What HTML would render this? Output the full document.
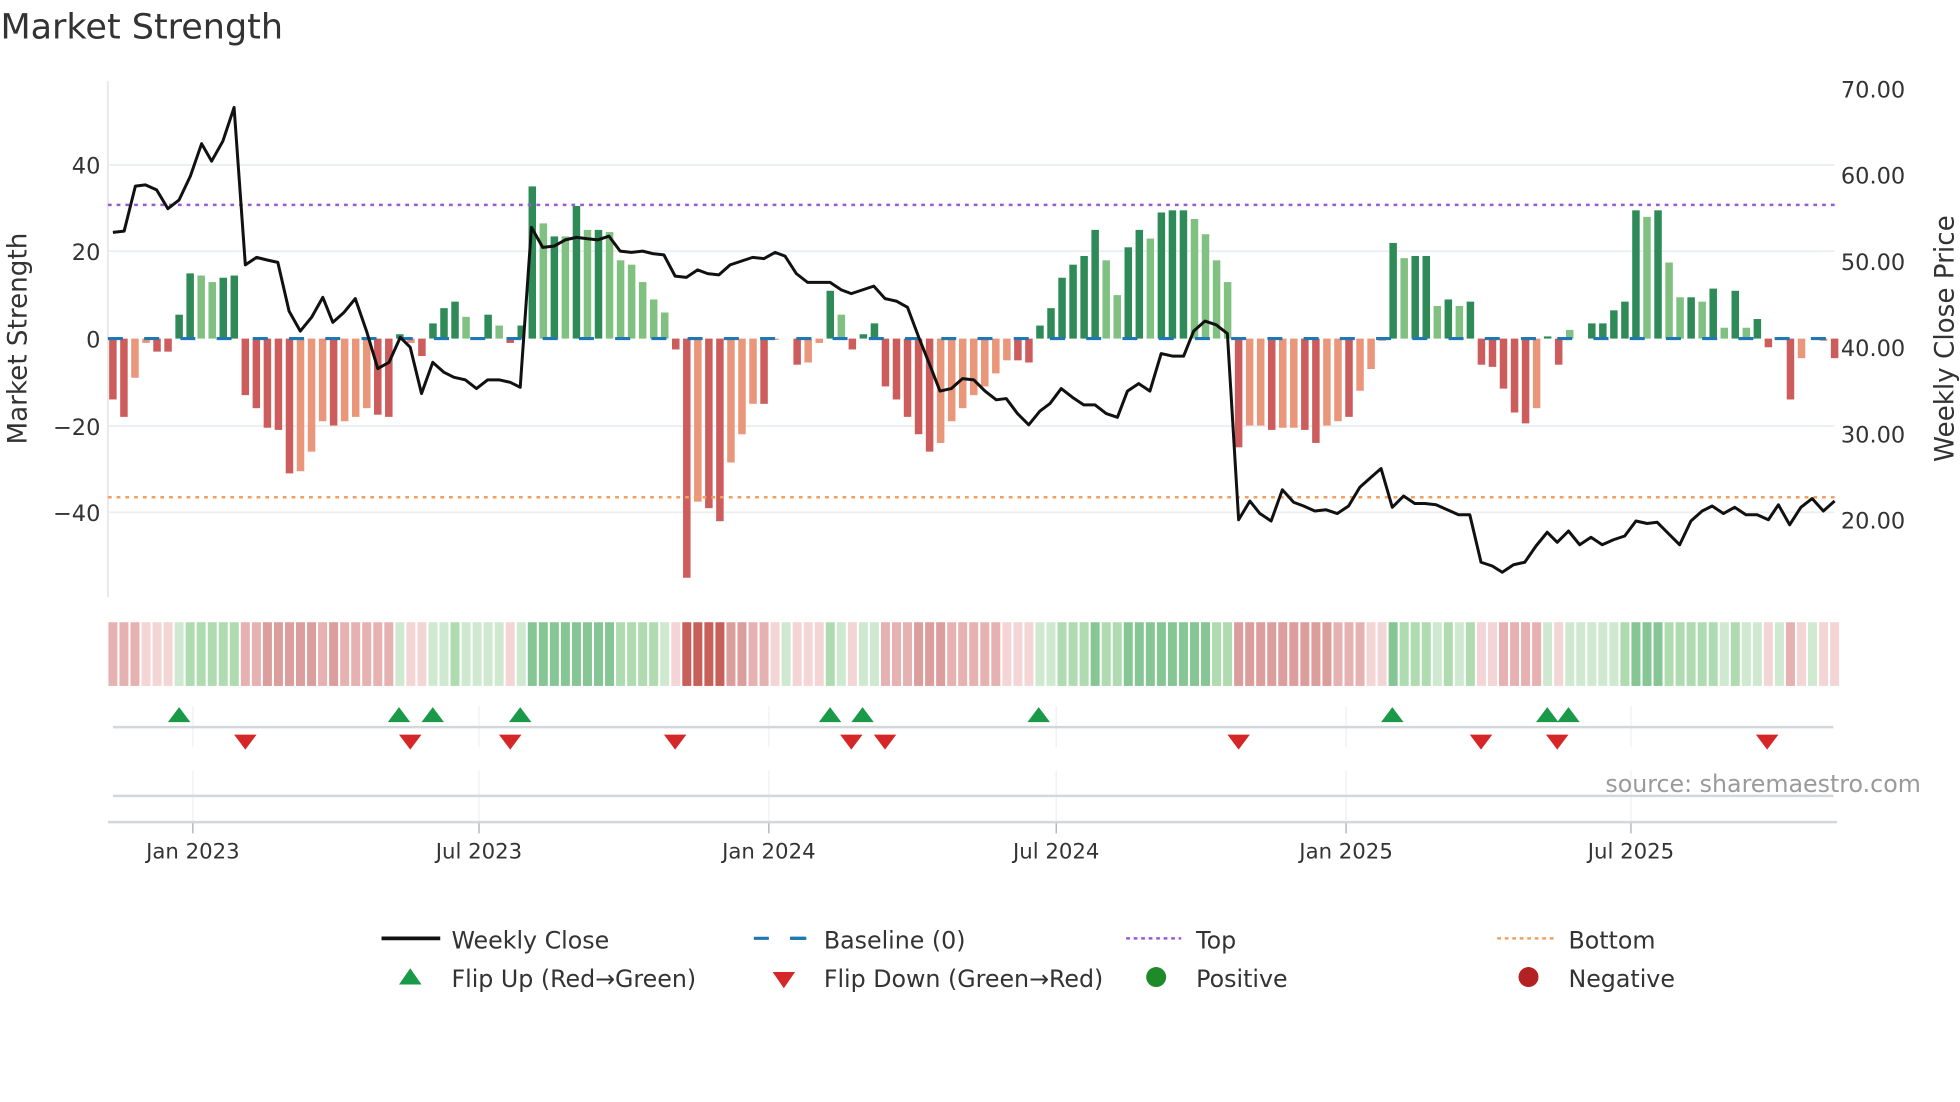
<!DOCTYPE html>
<html><head><meta charset="utf-8"><style>
html,body{margin:0;padding:0;background:#fff;width:1960px;height:1102px;overflow:hidden}
svg{display:block;font-family:"DejaVu Sans","Liberation Sans",sans-serif}
</style></head><body>
<svg id="s" width="1960" height="1102" viewBox="0 0 1568 882" xmlns="http://www.w3.org/2000/svg">
<text x="0" y="31" font-size="28" fill="#333">Market Strength</text>
<g stroke="#eceff2" stroke-width="1.5">
<line x1="86" x2="1468" y1="132" y2="132"/><line x1="86" x2="1468" y1="201" y2="201"/>
<line x1="86" x2="1468" y1="341" y2="341"/><line x1="86" x2="1468" y1="410" y2="410"/>
</g>
<line x1="86" x2="86" y1="65" y2="478" stroke="#e6e8eb" stroke-width="1.5"/>
<g font-size="18" fill="#333" text-anchor="end">
<text x="80" y="139">40</text><text x="80" y="208">20</text><text x="80" y="278">0</text>
<text x="80" y="348">−20</text><text x="80" y="417">−40</text>
</g>
<g font-size="18" fill="#333">
<text x="1473" y="78">70.00</text><text x="1473" y="147">60.00</text><text x="1473" y="216">50.00</text>
<text x="1473" y="285">40.00</text><text x="1473" y="354">30.00</text><text x="1473" y="423">20.00</text>
</g>
<text transform="translate(21,271) rotate(-90)" font-size="21" fill="#333" text-anchor="middle">Market Strength</text>
<text transform="translate(1563,271) rotate(-90)" font-size="21" fill="#333" text-anchor="middle">Weekly Close Price</text>
<g id="bars"></g>
<line x1="86" x2="1468" y1="271" y2="271" stroke="#1f77b4" stroke-width="2.5" stroke-dasharray="12,17"/>
<line x1="86" x2="1468" y1="164" y2="164" stroke="#9b59d6" stroke-width="2" stroke-dasharray="3,4"/>
<line x1="86" x2="1468" y1="398" y2="398" stroke="#f0a060" stroke-width="2" stroke-dasharray="3,4"/>
<polyline id="price" fill="none" stroke="#111" stroke-width="2.4" stroke-linejoin="round"/>
<g id="strip"></g>
<g id="vg" stroke="#eef0f2" stroke-width="1"></g>
<line x1="90" x2="1467" y1="582" y2="582" stroke="#d4d7da" stroke-width="2"/>
<line x1="90" x2="1467" y1="637" y2="637" stroke="#d4d7da" stroke-width="2"/>
<line x1="86" x2="1470" y1="658" y2="658" stroke="#d4d7da" stroke-width="2"/>
<g id="marks"></g>
<text x="1537" y="634" font-size="19" fill="#9a9a9a" text-anchor="end">source: sharemaestro.com</text>
<g id="dates" font-size="17" fill="#333" text-anchor="middle"></g>
<g font-size="19" fill="#333">
<line x1="305" x2="352" y1="751" y2="751" stroke="#111" stroke-width="3"/>
<text x="361" y="759">Weekly Close</text>
<line x1="603" x2="645" y1="751" y2="751" stroke="#1f77b4" stroke-width="2.5" stroke-dasharray="12,17"/>
<line x1="632" x2="645" y1="751" y2="751" stroke="#1f77b4" stroke-width="2.5"/>
<text x="659" y="759">Baseline (0)</text>
<line x1="901" x2="945" y1="751" y2="751" stroke="#9b59d6" stroke-width="2" stroke-dasharray="3,3"/>
<text x="957" y="759">Top</text>
<line x1="1198" x2="1243" y1="751" y2="751" stroke="#f0a060" stroke-width="2" stroke-dasharray="3,3"/>
<text x="1255" y="759">Bottom</text>
<polygon points="319,788 337,788 328,775" fill="#1a9a48"/>
<text x="361" y="790">Flip Up (Red→Green)</text>
<polygon points="618,778 636,778 627,791" fill="#d62728"/>
<text x="659" y="790">Flip Down (Green→Red)</text>
<circle cx="925" cy="782" r="8" fill="#1f8a2a"/>
<text x="957" y="790">Positive</text>
<circle cx="1223" cy="782" r="8" fill="#b22222"/>
<text x="1255" y="790">Negative</text>
</g>
</svg>
<script>
var NS="http://www.w3.org/2000/svg";
function el(p,t,a){var e=document.createElementNS(NS,t);for(var k in a)e.setAttribute(k,a[k]);p.appendChild(e);return e;}
var B=[[-14,1],[-18,1],[-9,0],[-1,0],[-3,1],[-3,1],[5.5,1],[15,1],[14.5,0],[13,0],[14,1],[14.5,1],
[-13,1],[-16,1],[-20.5,1],[-21,1],[-31,1],[-30.5,0],[-26,0],[-19,0],[-20,1],[-19,0],[-18,0],[-16,0],[-17.5,1],[-18,1],
[1,1],[-1,0],[-4,1],[3.5,1],[7,1],[8.5,1],[5,0],[0,1],[5.5,1],[3,0],[-1,1],[3,1],
[35,1],[26.5,0],[23.5,1],[23.5,0],[30.5,1],[25,0],[25,1],[24.5,0],[18,0],[17,0],[13,0],[9,0],[6,0],
[-2.5,1],[-55,1],[-37.5,0],[-39,1],[-42,1],[-28.5,0],[-22,0],[-15,0],[-15,1],[-0.3,0],[0,0],[-6,1],[-5.5,0],[-1,0],
[11,1],[5.5,0],[-2.5,1],[1,1],[3.5,1],[-11,1],[-14,1],[-18,1],[-22,1],[-26,1],[-24,0],[-19,0],[-16,0],[-13,0],[-11,0],[-8,0],[-5,0],[-5,1],[-5.5,1],
[3,1],[7,1],[14,1],[17,1],[19,1],[25,1],[18,0],[10,0],[21,1],[25,1],[23,0],[29,1],[29.5,1],[29.5,1],[27.5,0],[24,0],[18,0],[13,0],
[-25,1],[-20,0],[-20,0],[-21,1],[-20.5,0],[-20.5,0],[-21,1],[-24,1],[-20,0],[-19,0],[-18,1],[-12,0],[-7,0],[-0.5,0],
[22,1],[18.5,0],[19,1],[19,1],[7.5,0],[9,1],[7.5,0],[8.5,1],
[-6,1],[-6.5,1],[-11.5,1],[-17,1],[-19.5,1],[-16,0],[0.5,1],[-6,1],[2,0],[0,0],
[3.5,1],[3.5,1],[6.5,1],[8.5,1],[29.5,1],[28,0],[29.5,1],[17.5,0],[9.5,0],[9.5,1],[8.5,0],[11.5,1],[2.5,0],[11,1],[2.5,0],[4.5,1],
[-2,1],[0,0],[-14,1],[-4.5,0],[0,0],[-0.5,0],[-4.5,1]];
var bars=document.getElementById('bars'),strip=document.getElementById('strip');
var step=(1468-90)/(B.length-1);
B.forEach(function(b,i){
 var x=90+i*step,v=b[0],h=Math.abs(v)*3.48;
 var c=v>=0?(b[1]?'#2e8b57':'#80c080'):(b[1]?'#cd5c5c':'#e9967a');
 if(h>0.3) el(bars,'rect',{x:x-3,y:v>=0?271-h:271,width:6,height:h,fill:c});
 var a=Math.abs(v),sc;
 if(v>=0) sc=a<8?'#cfe9d0':a<20?'#aedcb0':'#86c695';
 else sc=a<8?'#f3d5d5':a<20?'#e6b1b1':a<35?'#dc9d9d':'#c8605a';
 el(strip,'rect',{x:x-3.6,y:498,width:7.2,height:51,fill:sc});
});
var P=[[90,186],[99,185],[108,149],[116,148],[125,152],[134,167],[143,160],[152,141],[161,115],[169,129],[178,113],[187,86],[196,212],[205,206],[213,208],[222,210],[231,249],[240,265],[249,254],[258,238],[266,258],[275,250],[284,239],[293,265],[302,295],[311,290],[320,270],[328,278],[337,315],[346,290],[355,298],[363,302],[372,304],[381,311],[390,304],[399,304],[408,306],[416,310],[425,182],[434,198],[443,197],[452,192],[461,190],[469,191],[478,192],[487,189],[496,201],[505,202],[514,201],[522,203],[531,204],[540,221],[549,222],[558,216],[566,219],[575,220],[584,212],[593,209],[602,206],[611,207],[620,202],[628,205],[637,219],[646,226],[655,226],[664,226],[673,232],[681,235],[690,232],[699,229],[708,239],[717,241],[726,246],[735,270],[743,290],[752,313],[761,311],[770,303],[779,304],[788,313],[797,320],[805,319],[814,331],[823,340],[832,329],[840,323],[849,311],[858,318],[867,324],[876,324],[885,331],[894,334],[902,313],[911,307],[920,313],[929,283],[938,285],[947,285],[955,265],[964,257],[973,260],[982,267],[991,416],[1000,401],[1008,411],[1017,417],[1026,392],[1035,402],[1043,405],[1052,409],[1061,408],[1070,411],[1079,405],[1088,390],[1097,382],[1105,375],[1114,406],[1123,397],[1132,403],[1140,403],[1149,404],[1158,408],[1167,412],[1176,412],[1185,450],[1194,453],[1202,458],[1211,452],[1220,450],[1229,437],[1238,426],[1246,434],[1255,425],[1264,436],[1273,430],[1282,436],[1291,432],[1300,429],[1309,417],[1318,419],[1326,418],[1335,427],[1344,436],[1353,417],[1362,409],[1370,405],[1379,411],[1388,406],[1397,412],[1406,412],[1415,416],[1423,404],[1432,420],[1441,406],[1450,399],[1459,409],[1468,401]];
document.getElementById('price').setAttribute('points',P.map(function(p){return p.join(',')}).join(' '));
var vg=document.getElementById('vg'),dates=document.getElementById('dates');
[[154,'Jan 2023'],[383,'Jul 2023'],[615,'Jan 2024'],[845,'Jul 2024'],[1077,'Jan 2025'],[1305,'Jul 2025']].forEach(function(d){
 el(vg,'line',{x1:d[0],x2:d[0],y1:565,y2:598});
 el(vg,'line',{x1:d[0],x2:d[0],y1:617,y2:658});
 el(vg,'line',{x1:d[0],x2:d[0],y1:658,y2:667,stroke:'#aaa'});
 var t=el(dates,'text',{x:d[0],y:687});t.textContent=d[1];
});
var m=document.getElementById('marks');
[143,319,346,416,664,690,831,1114,1238,1255].forEach(function(x){el(m,'polygon',{points:(x-9)+',578 '+(x+9)+',578 '+x+',566',fill:'#1a9a48'});});
[196,328,408,540,681,708,991,1185,1246,1414].forEach(function(x){el(m,'polygon',{points:(x-9)+',588 '+(x+9)+',588 '+x+',600',fill:'#d62728'});});
</script>
</body></html>
